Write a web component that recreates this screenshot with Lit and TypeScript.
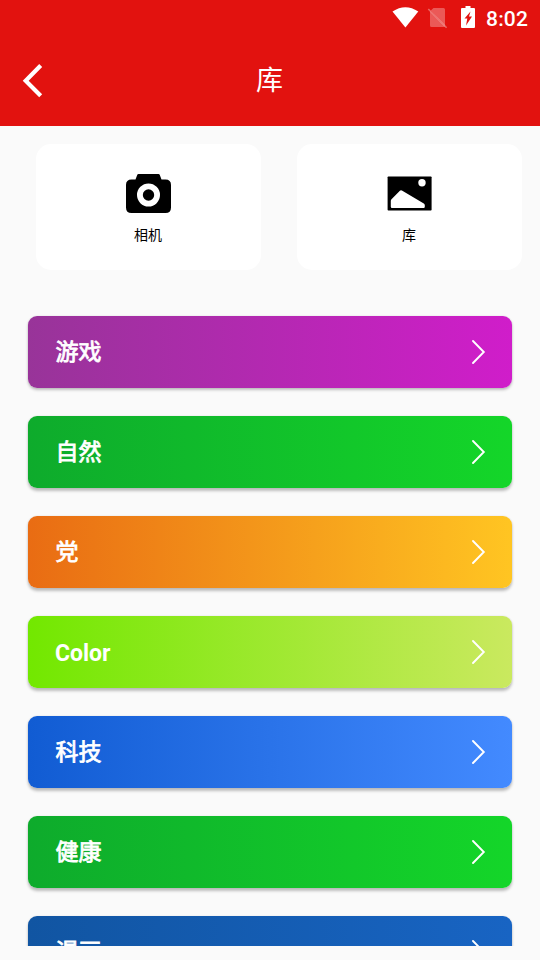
import { LitElement, html, css, svg } from "lit";
import { customElement, property } from "lit/decorators.js";

interface Category {
  label: string;
  from: string;
  to: string;
  lift: number;
}

const CATEGORIES: Category[] = [
  { label: "游戏", from: "#983499", to: "#d01dca", lift: 2 },
  { label: "自然", from: "#0eab2c", to: "#14d629", lift: 2.2 },
  { label: "党", from: "#e96c13", to: "#ffc522", lift: 2.4 },
  { label: "Color", from: "#72e800", to: "#cae95f", lift: 2.6 },
  { label: "科技", from: "#115cd3", to: "#438aff", lift: 2.8 },
  { label: "健康", from: "#0eab2c", to: "#14d629", lift: 3 },
  { label: "漫画", from: "#1155a2", to: "#1864c3", lift: 3 },
];

const cameraIcon = svg`<svg width="46" height="40" viewBox="-0.5 0 46 40">
  <path fill="#000" fill-rule="evenodd" d="M13 0H33Q34 0 34.3 1L36 5.500H40Q45.500 5.500 45.500 11V33.500Q45.500 39 40 39H6Q.5 39 .5 33.500V11Q.5 5.500 6 5.500H10L11.700 1Q12 0 13 0ZM23 9.500A11.500 11.500 0 1 0 23 32.500A11.500 11.500 0 1 0 23 9.500Z"/>
  <circle cx="23" cy="21" r="5.700"/>
</svg>`;

const galleryIcon = svg`<svg width="46" height="40" viewBox="-0.3 0 46 40">
  <rect x="1.300" y="2.500" width="44" height="34" rx=".8"/>
  <circle cx="35.700" cy="8.700" r="3.700" fill="#fff"/>
  <path fill="#fff" d="M4.500 27Q4.500 26 5.200 25.200L13.600 16.700Q14.500 15.900 15.600 16.600L37.500 29.500Q38.500 30.200 38.500 31.200V32.800Q38.500 34 37.300 34H5.700Q4.500 34 4.500 32.800Z"/>
</svg>`;

@customElement("status-bar")
export class StatusBar extends LitElement {
  static styles = css`
    :host {
      display: flex;
      height: 36px;
      color: #fff;
      justify-content: flex-end;
    }
    svg { display: block; flex: none; }
    .time {
      width: 54px;
      font: 500 21px/38px Roboto, sans-serif;
      letter-spacing: 0.2px;
    }
  `;
  render() {
    return html`
      <svg width="94" height="36" viewBox="0 0 94 36">
        <path fill="#fff" d="M.5 11.600Q13.400 2.800 26.300 11.600L13.400 27.500Z" />
        <path fill="#fff" fill-opacity=".3" d="M38 11L53 26.500Q52.500 27 51.500 27H39.500Q38 27 38 25.500ZM41.500 8H51.500Q53 8 53 9.500V26L38.800 10.500Z" />
        <path stroke="#fff" stroke-opacity=".35" stroke-width="1.600" d="M36.300 9L54.600 27.700" />
        <path fill="#fff" fill-rule="evenodd" d="M73.500 6H78.500V8H82Q83 8 83 9V27Q83 28 82 28H70Q69 28 69 27V9Q69 8 70 8H73.500ZM78.500 11.500L72.500 18.500H75.300L74 25.500L80 16.500H77Z" />
      </svg>
      <span class="time">8:02</span>
    `;
  }
}

@customElement("action-card")
export class ActionCard extends LitElement {
  @property() label = "";
  @property() icon = "camera";
  static styles = css`
    :host {
      box-sizing: border-box;
      display: flex;
      flex-direction: column;
      align-items: center;
      width: 225px;
      height: 126px;
      padding: 30px 1px 0 0;
      border-radius: 15px;
      background: #fff;
      color: #000;
    }
    svg { display: block; }
    .label {
      margin-top: 10px;
      font: 400 14px/22px Roboto, "Noto Sans CJK SC", sans-serif;
    }
  `;
  render() {
    return html`
      ${this.icon === "camera" ? cameraIcon : galleryIcon}
      <span class="label">${this.label}</span>
    `;
  }
}

@customElement("app-root")
export class AppRoot extends LitElement {
  static styles = css`
    :host {
      display: flex;
      flex-direction: column;
      box-sizing: border-box;
      width: 540px;
      height: 960px;
      padding-bottom: 14px;
      overflow: hidden;
      background: #fafafa;
      font-family: Roboto, "Noto Sans CJK SC", sans-serif;
    }
    .header {
      flex: none;
      height: 126px;
      background: #e2120f;
      color: #fff;
    }
    .toolbar {
      display: grid;
      grid-template-columns: 60px 1fr 61px;
      align-items: center;
      height: 90px;
    }
    .back { display: block; margin-left: 20px; }
    .title {
      margin: 0;
      text-align: center;
      font-size: 27px;
      line-height: 40px;
      font-weight: 400;
    }
    .content {
      flex: 1;
      min-height: 0;
      overflow: hidden;
    }
    .actions {
      display: flex;
      gap: 36px;
      padding: 18px 18px 0 36px;
    }
    .list {
      display: flex;
      flex-direction: column;
      gap: 28px;
      padding: 46px 28px 0;
    }
    .row {
      display: flex;
      flex: none;
      align-items: center;
      justify-content: space-between;
      box-sizing: border-box;
      height: 72px;
      padding: 0 26px 0 27px;
      border-radius: 9px;
      color: #fff;
      font-size: 23px;
      line-height: 34px;
    }
    .latin { padding-top: 3px; font-weight: 700; }
    .han { padding: 1px 0 0 0.5px; -webkit-text-stroke: 0.8px #fff; }
    .chevron { display: block; }
  `;
  render() {
    return html`
      <header class="header">
        <status-bar></status-bar>
        <div class="toolbar">
          <svg class="back" width="24" height="36" viewBox="0 0.7 24 36" fill="none">
            <path stroke="#fff" stroke-width="4.200" d="M20.700 3.300L5.700 18.500L20.700 33.500" />
          </svg>
          <h1 class="title">库</h1>
        </div>
      </header>
      <main class="content">
        <section class="actions">
          <action-card icon="camera" label="相机"></action-card>
          <action-card icon="gallery" label="库"></action-card>
        </section>
        <section class="list">
          ${CATEGORIES.map(
            (c) => html`<div
              class="row"
              style="background:linear-gradient(90deg,${c.from},${c.to});box-shadow:0 ${c.lift}px 3px rgba(0,0,0,.24),0 0 2px rgba(0,0,0,.1)"
            >
              <span class="${/^[a-z]/i.test(c.label) ? "latin" : "han"}">${c.label}</span>
              <svg class="chevron" width="16" height="28" viewBox="0 0 16 28" fill="none">
                <path stroke="#fff" stroke-width="1.900" stroke-linecap="round" d="M3 3L13.800 14L3 25" />
              </svg>
            </div>`
          )}
        </section>
      </main>
    `;
  }
}
